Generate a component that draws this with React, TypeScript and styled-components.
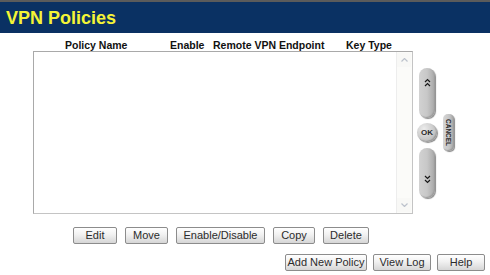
import React from 'react';
import styled, {createGlobalStyle, css} from 'styled-components';

const GlobalStyle = createGlobalStyle`
  html, body {
    margin: 0;
    padding: 0;
    background: #ffffff;
  }
  body {
    font-family: "Liberation Sans", Arial, sans-serif;
  }
`;

const navy = '#0a3163';

const Page = styled.div`
  width: 490px;
  height: 275px;
  overflow: hidden;
`;

const TitleBar = styled.div`
  display: flex;
  align-items: center;
  height: 31px;
  padding-left: 6px;
  border-top: 2px solid #5b5b5b;
  background: ${navy};
`;

const Title = styled.h1`
  margin: 0;
  font-size: 18px;
  font-weight: bold;
  color: #f4f436;
  line-height: 1;
  padding-top: 1px;
`;

const Heads = styled.div`
  display: grid;
  grid-template-columns: 105px 43px 133px auto;
  padding: 6px 0 0 65px;
  height: 12px;
`;

const Head = styled.span`
  font-size: 10.5px;
  font-weight: bold;
  line-height: 12px;
  color: #111;
  white-space: nowrap;
`;

const ListRow = styled.div`
  display: flex;
  align-items: center;
  margin-left: 33px;
`;

const ListBox = styled.div`
  display: flex;
  box-sizing: border-box;
  width: 380px;
  height: 163px;
  border: 1px solid #a9a9a9;
  border-right-color: #c4c4c4;
  border-bottom-color: #c4c4c4;
  background: #fff;
`;

const ListArea = styled.div`
  flex: 1;
`;

const ScrollTrack = styled.div`
  display: flex;
  flex-direction: column;
  justify-content: space-between;
  width: 14px;
  padding: 1px 1px 1px 0;
  border-left: 1px solid #ededed;
  background: #fbfbf9;
`;

const ScrollArrow = styled.div`
  display: flex;
  align-items: center;
  justify-content: center;
  height: 14px;
  background: #f8f8f6;
`;

const Pad = styled.div`
  display: flex;
  align-items: center;
  gap: 6px;
  margin-left: 4px;
`;

const PadColumn = styled.div`
  display: flex;
  flex-direction: column;
  align-items: center;
  width: 20px;
`;

const knob = css`
  background: radial-gradient(circle at 35% 30%, #ececec 0%, #cfcfcf 45%, #a9a9a9 100%);
  box-shadow: 1px 1px 1px #8a8a8a, inset -1px -1px 1px #9c9c9c;
`;

const Pill = styled.div<{$down?: boolean}>`
  ${knob};
  display: flex;
  flex-direction: column;
  align-items: center;
  justify-content: ${(p) => (p.$down ? 'flex-end' : 'flex-start')};
  box-sizing: border-box;
  width: 16px;
  height: 50px;
  margin: ${(p) => (p.$down ? '6px 0 0' : '0 0 5px')};
  padding: ${(p) => (p.$down ? '0 0 14px' : '10px 0 0')};
  border-radius: 8px;
  background: linear-gradient(to right, #d2d2d2 0%, #c8c8c8 50%, #a6a6a6 100%);
`;

const Ok = styled.div`
  ${knob};
  display: flex;
  align-items: center;
  justify-content: center;
  width: 20px;
  height: 19px;
  border-radius: 50%;
  font-size: 8px;
  font-weight: bold;
  color: #2a2a2a;
`;

const Cancel = styled.div`
  ${knob};
  display: flex;
  align-items: center;
  justify-content: center;
  width: 11px;
  height: 37px;
  border-radius: 5px;
  background: linear-gradient(to right, #d6d6d6 0%, #c6c6c6 55%, #a4a4a4 100%);
  writing-mode: vertical-rl;
  font-size: 6.5px;
  font-weight: bold;
  color: #2a2a2a;
`;

const ButtonRow = styled.div<{$right?: boolean}>`
  display: flex;
  gap: ${(p) => (p.$right ? 6 : 8)}px;
  justify-content: ${(p) => (p.$right ? 'flex-end' : 'flex-start')};
  margin-top: ${(p) => (p.$right ? 10 : 13)}px;
  padding: ${(p) => (p.$right ? '0 5px 0 0' : '0 0 0 73px')};
`;

const Button = styled.button<{$w: number}>`
  box-sizing: border-box;
  width: ${(p) => p.$w}px;
  height: 17px;
  padding: 0;
  border: 1px solid #8c8c8c;
  border-radius: 2px;
  background: linear-gradient(to bottom, #ffffff 0%, #f1f1f1 45%, #d6d6d6 100%);
  font-family: "Liberation Sans", Arial, sans-serif;
  font-size: 11px;
  line-height: 15px;
  color: #2b2b2b;
`;

const Chevrons = ({down}: {down?: boolean}) => (
  <svg width="7" height="9" viewBox="0 0 7 9">
    <g
      fill="none"
      stroke="#1a1a1a"
      strokeWidth="1.2"
      transform={down ? 'rotate(180 3.5 4.5)' : undefined}
    >
      <polyline points="1,4 3.5,1.5 6,4" />
      <polyline points="1,8 3.5,5.5 6,8" />
    </g>
  </svg>
);

const ScrollGlyph = ({down}: {down?: boolean}) => (
  <svg width="7" height="4" viewBox="0 0 7 4">
    <polyline
      points={down ? '0.5,0.5 3.5,3.5 6.5,0.5' : '0.5,3.5 3.5,0.5 6.5,3.5'}
      fill="none"
      stroke="#bcc2cc"
      strokeWidth="1.2"
    />
  </svg>
);

export default function App() {
  return (
    <Page>
      <GlobalStyle />
      <TitleBar>
        <Title>VPN Policies</Title>
      </TitleBar>
      <Heads>
        <Head>Policy Name</Head>
        <Head>Enable</Head>
        <Head>Remote VPN Endpoint</Head>
        <Head>Key Type</Head>
      </Heads>
      <ListRow>
        <ListBox>
          <ListArea />
          <ScrollTrack>
            <ScrollArrow>
              <ScrollGlyph />
            </ScrollArrow>
            <ScrollArrow>
              <ScrollGlyph down />
            </ScrollArrow>
          </ScrollTrack>
        </ListBox>
        <Pad>
          <PadColumn>
            <Pill>
              <Chevrons />
            </Pill>
            <Ok>OK</Ok>
            <Pill $down>
              <Chevrons down />
            </Pill>
          </PadColumn>
          <Cancel>CANCEL</Cancel>
        </Pad>
      </ListRow>
      <ButtonRow>
        <Button $w={44}>Edit</Button>
        <Button $w={43}>Move</Button>
        <Button $w={89}>Enable/Disable</Button>
        <Button $w={42}>Copy</Button>
        <Button $w={46}>Delete</Button>
      </ButtonRow>
      <ButtonRow $right>
        <Button $w={82}>Add New Policy</Button>
        <Button $w={58}>View Log</Button>
        <Button $w={48}>Help</Button>
      </ButtonRow>
    </Page>
  );
}
